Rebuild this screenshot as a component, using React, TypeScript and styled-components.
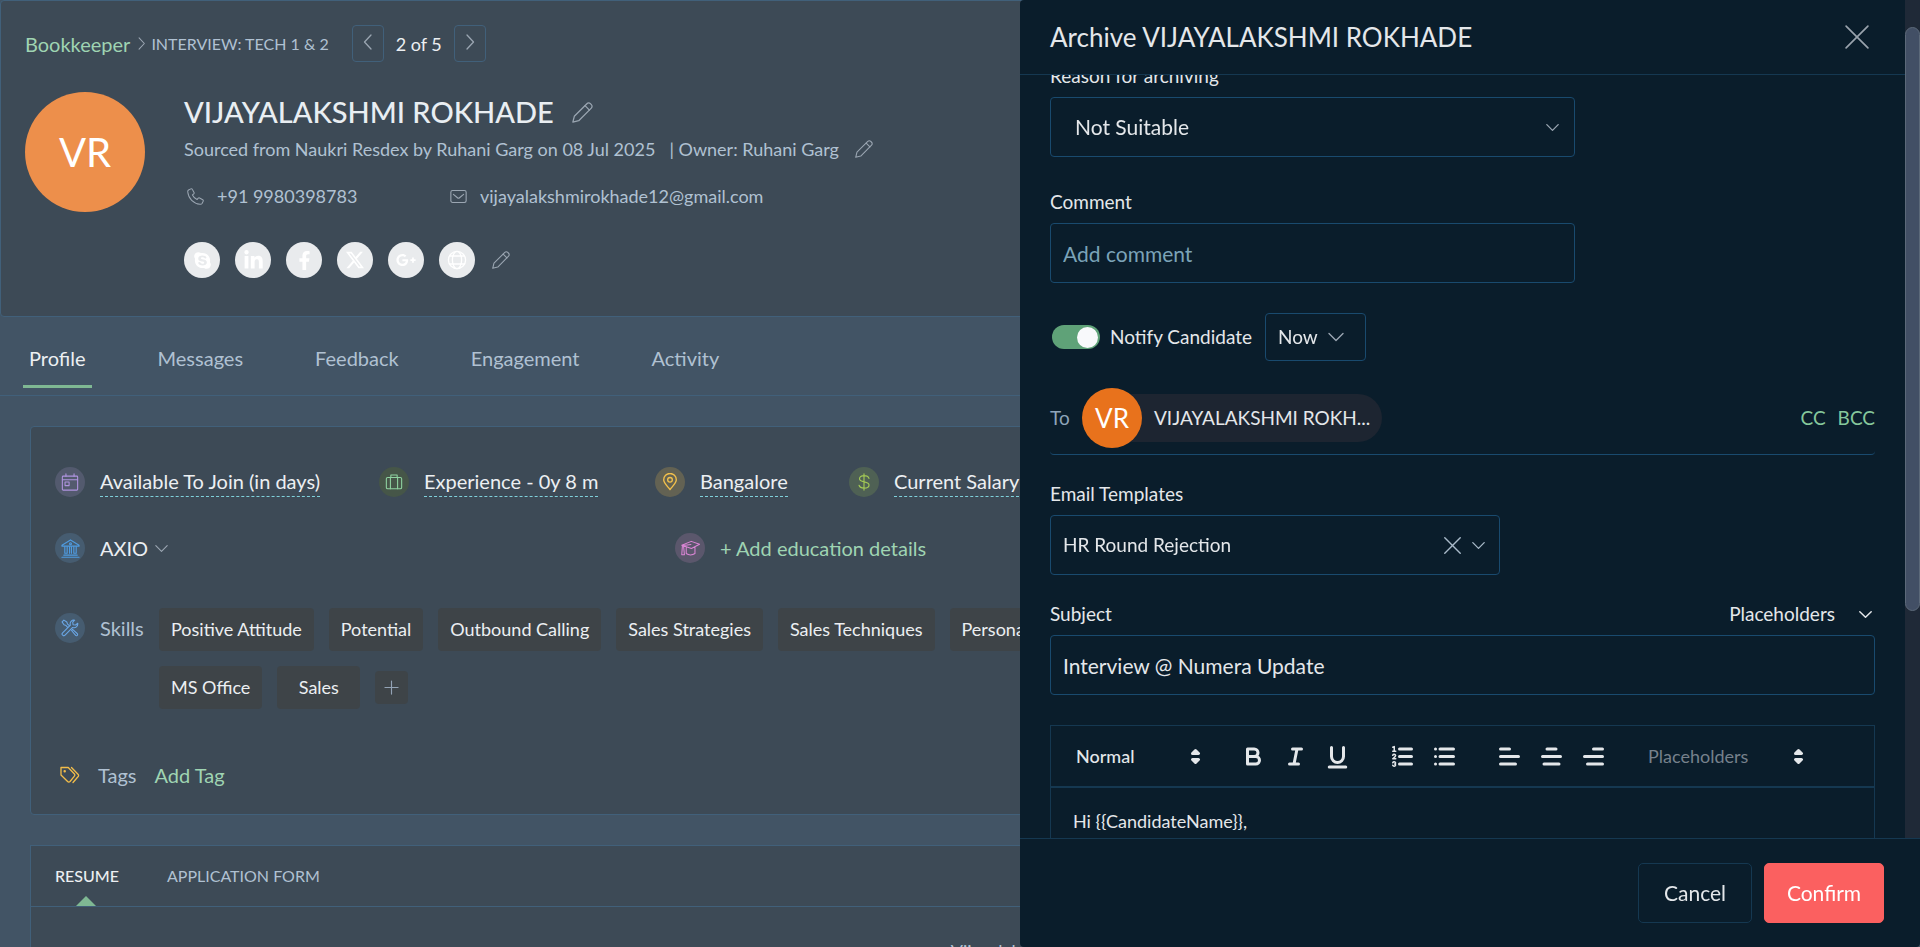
import React, { useLayoutEffect, useRef } from 'react';
import styled, { createGlobalStyle, css } from 'styled-components';
import { FaSkype, FaLinkedinIn, FaFacebookF, FaGooglePlusG } from 'react-icons/fa';
import { BsTwitterX } from 'react-icons/bs';

const c = {
  page: '#425465',
  panel: '#3d4a56',
  line: '#41607a',
  text: '#eceff2',
  muted: '#b0c1d2',
  icon: '#9ba6b2',
  green: '#9fd4b2',
  accent: '#7fb893',
  chip: '#3e4448',
  drawer: '#0a1d2b',
  field: '#194a6e',
  edge: '#153851',
  white: '#e4e7ea',
};

const GlobalStyle = createGlobalStyle`
  *, *::before, *::after { box-sizing: border-box; }
  html, body, #root { height: 100%; }
  body {
    margin: 0;
    overflow: hidden;
    background: ${c.page};
    color: ${c.text};
    font-family: Lato, "Liberation Sans", sans-serif;
    font-size: 20px;
    line-height: 26px;
  }
  button, input, select { font: inherit; color: inherit; }
  button { padding: 0; border: 0; background: none; cursor: pointer; }
  h1, h2, p { margin: 0; font-weight: 400; }
  a { color: inherit; text-decoration: none; }
  svg { display: block; flex: none; }
`;

/* ---------- icons ---------- */

type StrokeProps = {
  size: number;
  w?: number;
  box?: number;
  color?: string;
  children: React.ReactNode;
};

const Stroke = ({ size, w = 1, box = 20, color = 'currentColor', children }: StrokeProps) => (
  <svg
    width={size}
    height={size}
    viewBox={`0 0 ${box} ${box}`}
    fill="none"
    stroke={color}
    strokeWidth={w}
    strokeLinecap="round"
    strokeLinejoin="round"
    aria-hidden="true"
  >
    {children}
  </svg>
);

const Pencil = ({ size }: { size: number }) => (
  <Stroke size={size} w={1.2} color={c.icon}>
    <path d="M.8 19.2 2.2 13.6 14.2 1.6a2.3 2.3 0 0 1 3.3 0l.9.9a2.3 2.3 0 0 1 0 3.3L6.4 17.8Z" />
    <path d="m12.4 3.5 4.2 4.2" />
  </Stroke>
);

const Chevron = ({ size, color = c.icon, w = 1.4 }: { size: number; color?: string; w?: number }) => (
  <Stroke size={size} w={w} box={16} color={color}>
    <path d="m1 4.5 7 7 7-7" />
  </Stroke>
);

const ChevronLeft = () => (
  <Stroke size={16} w={1.3} box={16} color={c.icon}>
    <path d="M11 1 4.5 8l6.5 7" />
  </Stroke>
);

const ChevronRight = ({ size = 16 }: { size?: number }) => (
  <Stroke size={size} w={1.3} box={16} color={c.icon}>
    <path d="m5 1 6.5 7L5 15" />
  </Stroke>
);

const Cross = ({ size, w = 1.5, color = '#9aa3ad' }: { size: number; w?: number; color?: string }) => (
  <Stroke size={size} w={w} box={22} color={color}>
    <path d="m1 1 20 20M21 1 1 21" />
  </Stroke>
);

const Phone = () => (
  <Stroke size={17} w={1.2} color={c.icon}>
    <path d="M4.5 1 1.8 2.3C1 2.8.8 3.7.9 4.7 1.6 12.3 7.7 18.4 15.3 19.1c1 .1 1.9-.1 2.4-.9l1.3-2.7c.3-.7.1-1.4-.5-1.7l-3.7-2.1c-.6-.3-1.2-.2-1.6.3l-1.4 1.6C9.5 12.5 7.5 10.5 6.4 8.2L8 6.8c.5-.4.6-1 .3-1.6L6.2 1.5C5.9.9 5.2.7 4.5 1Z" />
  </Stroke>
);

const Mail = () => (
  <Stroke size={17} w={1.3} color={c.icon}>
    <rect x="1" y="3" width="18" height="14" rx="2" />
    <path d="m4 7.5 4.8 4c.7.6 1.7.6 2.4 0l4.8-4" />
  </Stroke>
);

const Globe = () => (
  <Stroke size={20} w={1.3} color="#fff">
    <circle cx="10" cy="10" r="8.6" />
    <ellipse cx="10" cy="10" rx="4.6" ry="8.6" />
    <path d="M2.5 6h15M2.5 14h15" />
  </Stroke>
);

const CalendarIcon = () => (
  <Stroke size={18} w={1.2} color="#b094e0">
    <rect x="1.5" y="3.5" width="17" height="15.5" rx="1" />
    <path d="M1.5 7.5h17M5.5 1v2.5M14.5 1v2.5" />
    <rect x="4.5" y="10" width="4.5" height="4" />
  </Stroke>
);

const CaseIcon = () => (
  <Stroke size={18} w={1.2} color="#8fd3a0">
    <rect x="1.5" y="5" width="17" height="12.5" rx="1.5" />
    <path d="M6 5v12.5M14 5v12.5M6.5 5V2.2h7V5" />
  </Stroke>
);

const PinIcon = () => (
  <Stroke size={18} w={1.5} color="#f2c04c">
    <path d="M10 18.5c-3-4-7-7.5-7-11a7 7 0 0 1 14 0c0 3.5-4 7-7 11Z" />
    <circle cx="10" cy="7.6" r="2.6" />
  </Stroke>
);

const DollarIcon = () => (
  <Stroke size={18} w={1.3} color="#a3c955">
    <path d="M10 1v18M15.5 6c-.6-1.8-2.6-3-5.4-3C6.9 3 5 4.4 5 6.4 5 11 15.6 8.6 15.6 13.3c0 2.2-2.2 3.5-5.5 3.5-3 0-5-1.2-5.6-3.2" />
  </Stroke>
);

const BankIcon = () => (
  <Stroke size={19} w={1.2} color="#4f9be0">
    <path d="M1 6.5 10 1l9 5.5v1H1ZM3 17h14M1 19.2h18" />
    <path d="M4 8v7M6.5 8v7M4 15h2.5M9 8v7M11 8v7M13.5 8v7M16 8v7h-2.5" />
    <circle cx="10" cy="5" r="1" />
  </Stroke>
);

const CapIcon = () => (
  <Stroke size={19} w={1.1} color="#dc86d6">
    <path d="m.8 6.500 10-4 8.700 3-8.500 4.500ZM1.500 7l-.7 9.500h2.800L2.700 7.500M5.500 8.300v7c2.500 1.900 6.500 1.900 9.200 0v-7M2.500 6.800l8-1" />
  </Stroke>
);

const ToolsIcon = () => (
  <Stroke size={18} w={1.2} color="#6aa7e6">
    <path d="M7.400 9.300 5.600 7.300 3.300 6.400 1.200 3.200l2-2 3.200 2.100.9 2.300 2 1.800" />
    <path d="m11.700 12.800 1.200-1.200 5.300 4.800c1 1.100-.8 2.900-1.900 1.900Z" />
    <path d="M18.600 4.700a4.200 4.200 0 0 1-5.600 4.700L4.500 18a1.900 1.900 0 0 1-2.700-2.700l8.600-8.500A4.200 4.200 0 0 1 15.200 1.300L13 3.500l.4 2.800 2.900.4Z" />
  </Stroke>
);

const TagsIcon = () => (
  <Stroke size={20} w={1.3} color="#f2bd4a">
    <path d="M1 2.500h7.200l6 6.200c.8.800.8 1.900 0 2.600L10 16.500c-.7.700-1.700.7-2.400 0L1 10Z" />
    <path d="m11.500 2.500 6.500 6.700c.8.800.8 1.900 0 2.600L13 17.500" />
    <circle cx="4.700" cy="6.200" r=".6" />
  </Stroke>
);

const EditorGlyph = ({ children }: { children: React.ReactNode }) => (
  <Stroke size={27} w={2} box={18} color={c.white}>
    {children}
  </Stroke>
);

const UpDown = () => (
  <svg width="27" height="27" viewBox="0 0 18 18" fill={c.white} stroke={c.white} strokeWidth="2" strokeLinejoin="round" aria-hidden="true">
    <path d="m7 11 2 2 2-2ZM7 7l2-2 2 2Z" />
  </svg>
);

/* ---------- candidate page ---------- */

const Page = styled.main`
  height: 100%;
  overflow: hidden;
`;

const Panel = styled.section`
  border: 1px solid ${c.line};
  border-radius: 4px;
  background: ${c.panel};
`;

const Header = styled(Panel)`
  padding: 24px 24px 38px;
`;

const Crumbs = styled.nav`
  display: flex;
  align-items: center;
  height: 37px;
`;

const JobLink = styled.a`
  color: ${c.green};
  margin-right: 5px;
`;

const Stage = styled.span`
  margin: 0 23px 0 3px;
  color: ${c.muted};
  font-size: 16px;
`;

const StepButton = styled.button`
  display: grid;
  place-items: center;
  width: 32px;
  height: 37px;
  padding-bottom: 4px;
  border: 1px solid ${c.line};
  border-radius: 4px;
`;

const Position = styled.span`
  width: 70px;
  font-size: 18px;
  text-align: center;
`;

const Identity = styled.div`
  display: flex;
  gap: 39px;
  margin-top: 30px;
`;

const Avatar = styled.div<{ $size: number }>`
  display: grid;
  flex: none;
  place-items: center;
  width: ${p => p.$size}px;
  height: ${p => p.$size}px;
  border-radius: 50%;
  background: ${p => (p.$size > 100 ? '#ed8f4b' : '#e8721c')};
  color: #fff;
  font-size: ${p => (p.$size > 100 ? 40 : 26)}px;
`;

const Details = styled.div`
  min-width: 0;
  color: ${c.muted};
  font-size: 18px;
`;

const NameRow = styled.div`
  display: flex;
  align-items: center;
  gap: 16px;
  height: 40px;
`;

const Name = styled.h1`
  color: #e9eef2;
  font-size: 29px;
  font-weight: 500;
`;

const SourceRow = styled.div`
  display: flex;
  align-items: center;
  gap: 14px;
  height: 34px;
`;

const IconButton = styled.button`
  display: grid;
  place-items: center;
  margin-left: 2px;
`;

const ContactRow = styled.address`
  display: grid;
  grid-template-columns: 263px auto;
  margin: 17px 0 33px 3px;
  font-style: normal;
`;

const Contact = styled.a`
  display: flex;
  align-items: center;
  gap: 13px;
`;

const Socials = styled.div`
  display: flex;
  align-items: center;
  gap: 15px;
`;

const Social = styled.a`
  display: grid;
  place-items: center;
  width: 36px;
  height: 36px;
  border-radius: 50%;
  background: #e9ebed;
  color: #fff;
`;

const Tabs = styled.nav`
  display: flex;
  gap: 60px;
  height: 79px;
  padding: 0 23px;
  border-bottom: 1px solid ${c.line};
`;

const Tab = styled.a<{ $active?: boolean }>`
  height: 71px;
  padding: 28px 6px 0;
  border-bottom: 3px solid ${p => (p.$active ? c.accent : 'transparent')};
  color: ${p => (p.$active ? c.text : c.muted)};
`;

const ProfileCard = styled(Panel)`
  margin: 30px;
  padding: 40px 24px 26px;
`;

const Facts = styled.div`
  display: grid;
  grid-template-columns: 324px 276px 194px auto;
`;

const Background = styled.div`
  display: grid;
  grid-template-columns: 620px auto;
  margin-top: 36px;
`;

const Fact = styled.div`
  display: flex;
  align-items: center;
  gap: 15px;
  height: 30px;
  white-space: nowrap;
`;

const Bubble = styled.span<{ $bg: string }>`
  display: grid;
  flex: none;
  place-items: center;
  width: 30px;
  height: 30px;
  border-radius: 50%;
  background: ${p => p.$bg};
`;

const FactButton = styled.button`
  height: 30px;
  padding-bottom: 2px;
  border-bottom: 1px dashed #7fd0da;
`;

const Company = styled.button`
  display: flex;
  align-items: center;
  gap: 7px;
`;

const GreenButton = styled.button`
  color: ${c.green};
`;

const SkillsRow = styled.div`
  display: flex;
  align-items: flex-start;
  gap: 16px;
  margin-top: 45px;
`;

const SkillsLabel = styled(Fact)`
  width: 88px;
  margin-top: 5px;
  color: ${c.muted};
`;

const SkillList = styled.div`
  display: flex;
  flex-wrap: wrap;
  align-items: center;
  gap: 15px;
  max-width: 980px;
`;

const Chip = styled.span`
  min-width: 83px;
  height: 43px;
  padding: 0 12px;
  border-radius: 4px;
  background: ${c.chip};
  font-size: 18px;
  line-height: 43px;
  text-align: center;
`;

const AddSkill = styled.button`
  display: grid;
  place-items: center;
  width: 33px;
  height: 33px;
  border-radius: 4px;
  background: ${c.chip};
`;

const TagsRow = styled.div`
  display: flex;
  align-items: center;
  gap: 18px;
  margin: 53px 0 0 5px;
  color: ${c.muted};
`;

const ResumeCard = styled(Panel)`
  margin: 0 30px;
  border-radius: 0;
`;

const ResumeTabs = styled.div`
  display: flex;
  gap: 48px;
  padding: 0 24px;
  height: 61px;
  border-bottom: 1px solid ${c.line};
`;

const ResumeTab = styled.button<{ $active?: boolean }>`
  position: relative;
  height: 60px;
  color: ${p => (p.$active ? c.text : c.muted)};
  font-size: 16px;
  font-weight: ${p => (p.$active ? 500 : 400)};
  ${p =>
    p.$active &&
    css`
      &::after {
        content: '';
        position: absolute;
        bottom: 0;
        left: 21px;
        border: 10px solid transparent;
        border-top-width: 0;
        border-bottom-color: ${c.accent};
      }
    `}
`;

const ResumeTitle = styled.h2`
  padding: 31px 0 300px 49.5%;
  color: ${c.muted};
  font-size: 18px;
`;

/* ---------- archive drawer ---------- */

const Drawer = styled.aside`
  position: fixed;
  inset: 0 0 0 auto;
  display: flex;
  flex-direction: column;
  width: min(900px, 100%);
  border-radius: 4px;
  background: ${c.drawer};
  color: ${c.white};
  font-size: 19px;
`;

const DrawerMain = styled.div`
  display: grid;
  flex: 1;
  grid-template-columns: 1fr 15px;
  min-height: 0;
`;

const DrawerColumn = styled.div`
  display: flex;
  flex-direction: column;
  min-width: 0;
  min-height: 0;
`;

const DrawerHead = styled.header`
  display: flex;
  flex: none;
  align-items: center;
  justify-content: space-between;
  height: 75px;
  padding: 0 36px 0 30px;
  border-bottom: 1px solid ${c.edge};
`;

const DrawerTitle = styled.h2`
  font-size: 26px;
`;

const ScrollTrack = styled.div`
  padding-top: 27px;
  background: #1f2937;
`;

const ScrollThumb = styled.div`
  height: 72%;
  border: 1px solid #5c6979;
  border-radius: 8px;
  background: #424f65;
`;

const Form = styled.div`
  flex: 1;
  min-height: 0;
  padding: 32px 30px;
  overflow-y: auto;
  scrollbar-width: none;
`;

const Field = styled.div<{ $width?: number; $gap: number }>`
  max-width: ${p => (p.$width ? `${p.$width}px` : 'none')};
  margin-bottom: ${p => p.$gap}px;
`;

const LabelRow = styled.div`
  display: flex;
  justify-content: space-between;
  margin-bottom: 8px;
`;

const SelectWrap = styled.div`
  position: relative;
`;

const box = css`
  display: block;
  width: 100%;
  height: 60px;
  padding: 0 12px;
  border: 1px solid ${c.field};
  border-radius: 4px;
  outline: 0;
  background: transparent;
  appearance: none;
`;

const Input = styled.input`
  ${box}
  font-size: 21px;
  &::placeholder { color: #7ba3b8; opacity: 1; }
`;

const Select = styled.select<{ $roomy?: boolean }>`
  ${box}
  padding-left: ${p => (p.$roomy ? 24 : 12)}px;
  font-size: ${p => (p.$roomy ? 21 : 19)}px;
`;

const NowSelect = styled.select`
  ${box}
  width: 101px;
  height: 48px;
`;

const SelectIcons = styled.span<{ $right: number }>`
  position: absolute;
  top: 0;
  right: ${p => p.$right}px;
  bottom: 0;
  display: flex;
  align-items: center;
  gap: 11px;
  pointer-events: none;
  button { pointer-events: auto; }
`;

const PlaceholderButton = styled.button`
  display: flex;
  align-items: center;
  gap: 24px;
  margin-right: 3px;
`;

const NotifyRow = styled.div`
  display: flex;
  align-items: center;
  gap: 10px;
  margin: 0 0 27px 2px;
  label { width: 145px; }
`;

const Toggle = styled.input`
  display: flex;
  align-items: center;
  width: 48px;
  height: 24px;
  margin: 0;
  padding: 0 2px;
  border-radius: 12px;
  background: #33475a;
  appearance: none;
  &::before {
    content: '';
    width: 21px;
    height: 21px;
    border-radius: 50%;
    background: #f8f9fb;
  }
  &:checked { background: #5fa278; }
  &:checked::before { margin-left: auto; }
`;

const ToRow = styled.div`
  display: flex;
  align-items: center;
  height: 67px;
  margin-bottom: 26px;
  padding-bottom: 6px;
  border-bottom: 1px solid ${c.field};
  border-radius: 4px;
`;

const ToLabel = styled.span`
  width: 32px;
  color: #8ea4ba;
`;

const Recipient = styled.div`
  display: flex;
  align-items: center;
`;

const RecipientName = styled.span`
  width: 270px;
  height: 48px;
  margin-left: -30px;
  padding: 0 12px 0 42px;
  border-radius: 0 24px 24px 0;
  background: #1d2531;
  line-height: 48px;
  white-space: nowrap;
`;

const RecipientAvatar = styled(Avatar)`
  z-index: 1;
`;

const CopyButtons = styled.div`
  display: flex;
  gap: 12px;
  margin-left: auto;
  color: #86c89c;
`;

const Editor = styled.div`
  min-height: 480px;
  border: 1px solid ${c.edge};
`;

const Toolbar = styled.div`
  display: flex;
  align-items: center;
  gap: 23px;
  height: 62px;
  padding-left: 25px;
  border-bottom: 2px solid ${c.edge};
`;

const ToolGroup = styled.div`
  display: flex;
`;

const Tool = styled.button`
  display: grid;
  place-items: center;
  width: 42px;
  height: 36px;
`;

const Picker = styled.button<{ $width: number; $dim?: boolean }>`
  display: flex;
  align-items: center;
  justify-content: space-between;
  width: ${p => p.$width}px;
  margin-left: ${p => (p.$dim ? 11 : 0)}px;
  color: ${p => (p.$dim ? '#76818c' : c.white)};
  font-size: 18px;
  font-weight: ${p => (p.$dim ? 400 : 500)};
`;

const Message = styled.p`
  padding: 20px 22px;
  font-size: 18px;
`;

const DrawerFoot = styled.footer`
  display: flex;
  justify-content: flex-end;
  gap: 12px;
  padding: 24px 36px;
  border-top: 1px solid ${c.edge};
`;

const Action = styled.button<{ $primary?: boolean }>`
  width: ${p => (p.$primary ? 120 : 114)}px;
  height: 60px;
  border: 1px solid ${p => (p.$primary ? '#fb6060' : c.edge)};
  border-radius: 5px;
  background: ${p => (p.$primary ? '#fb6060' : 'transparent')};
  color: ${p => (p.$primary ? '#fff' : c.white)};
  font-size: 21px;
`;

const skills = [
  'Positive Attitude',
  'Potential',
  'Outbound Calling',
  'Sales Strategies',
  'Sales Techniques',
  'Personal Selling',
  'MS Office',
  'Sales',
];

const socials = [
  { name: 'Skype', icon: <FaSkype size={19} /> },
  { name: 'LinkedIn', icon: <FaLinkedinIn size={21} /> },
  { name: 'Facebook', icon: <FaFacebookF size={19} /> },
  { name: 'X', icon: <BsTwitterX size={18} /> },
  { name: 'Google Plus', icon: <FaGooglePlusG size={20} /> },
  { name: 'Website', icon: <Globe /> },
];

const CandidateHeader = () => (
  <Header>
    <Crumbs aria-label="Breadcrumb">
      <JobLink href="#job">Bookkeeper</JobLink>
      <ChevronRight size={13} />
      <Stage>INTERVIEW: TECH 1 &amp; 2</Stage>
      <StepButton aria-label="Previous candidate"><ChevronLeft /></StepButton>
      <Position>2 of 5</Position>
      <StepButton aria-label="Next candidate"><ChevronRight /></StepButton>
    </Crumbs>
    <Identity>
      <Avatar $size={120}>VR</Avatar>
      <Details>
        <NameRow>
          <Name>VIJAYALAKSHMI ROKHADE</Name>
          <IconButton aria-label="Edit name"><Pencil size={21} /></IconButton>
        </NameRow>
        <SourceRow>
          <span>Sourced from Naukri Resdex by Ruhani Garg on 08 Jul 2025</span>
          <span>| Owner: Ruhani Garg</span>
          <IconButton aria-label="Edit owner"><Pencil size={18} /></IconButton>
        </SourceRow>
        <ContactRow>
          <Contact href="tel:+919980398783"><Phone />+91 9980398783</Contact>
          <Contact href="mailto:vijayalakshmirokhade12@gmail.com"><Mail />vijayalakshmirokhade12@gmail.com</Contact>
        </ContactRow>
        <Socials>
          {socials.map(s => (
            <Social key={s.name} href="#social" aria-label={s.name}>{s.icon}</Social>
          ))}
          <IconButton aria-label="Edit social links"><Pencil size={18} /></IconButton>
        </Socials>
      </Details>
    </Identity>
  </Header>
);

const Profile = () => (
  <ProfileCard>
    <Facts>
      <Fact><Bubble $bg="#535a6e"><CalendarIcon /></Bubble><FactButton>Available To Join (in days)</FactButton></Fact>
      <Fact><Bubble $bg="#465648"><CaseIcon /></Bubble><FactButton>Experience - 0y 8 m</FactButton></Fact>
      <Fact><Bubble $bg="#636253"><PinIcon /></Bubble><FactButton>Bangalore</FactButton></Fact>
      <Fact><Bubble $bg="#4f6154"><DollarIcon /></Bubble><FactButton>Current Salary</FactButton></Fact>
    </Facts>
    <Background>
      <Fact><Bubble $bg="#465c70"><BankIcon /></Bubble><Company>AXIO<Chevron size={13} /></Company></Fact>
      <Fact><Bubble $bg="#5b576c"><CapIcon /></Bubble><GreenButton>+ Add education details</GreenButton></Fact>
    </Background>
    <SkillsRow>
      <SkillsLabel><Bubble $bg="#465c70"><ToolsIcon /></Bubble>Skills</SkillsLabel>
      <SkillList>
        {skills.map(s => <Chip key={s}>{s}</Chip>)}
        <AddSkill aria-label="Add skill">
          <Stroke size={15} w={1.2} box={16} color="#93a3b5"><path d="M8 1v14M1 8h14" /></Stroke>
        </AddSkill>
      </SkillList>
    </SkillsRow>
    <TagsRow><TagsIcon /><span>Tags</span><GreenButton>Add Tag</GreenButton></TagsRow>
  </ProfileCard>
);

const ArchiveDrawer = () => {
  const form = useRef<HTMLDivElement>(null);
  useLayoutEffect(() => {
    if (form.current) form.current.scrollTop = 44;
  }, []);

  return (
    <Drawer role="dialog" aria-label="Archive candidate">
      <DrawerMain>
        <DrawerColumn>
          <DrawerHead>
            <DrawerTitle>Archive VIJAYALAKSHMI ROKHADE</DrawerTitle>
            <IconButton aria-label="Close"><Cross size={24} /></IconButton>
          </DrawerHead>
          <Form ref={form}>
            <Field $width={525} $gap={32}>
              <LabelRow><label htmlFor="reason">Reason for archiving</label></LabelRow>
              <SelectWrap>
                <Select id="reason" $roomy><option>Not Suitable</option></Select>
                <SelectIcons $right={16}><Chevron size={13} w={1.6} /></SelectIcons>
              </SelectWrap>
            </Field>
            <Field $width={525} $gap={30}>
              <LabelRow><label htmlFor="comment">Comment</label></LabelRow>
              <Input id="comment" placeholder="Add comment" />
            </Field>
            <NotifyRow>
              <Toggle type="checkbox" role="switch" id="notify" defaultChecked />
              <label htmlFor="notify">Notify Candidate</label>
              <SelectWrap>
                <NowSelect aria-label="When to notify"><option>Now</option></NowSelect>
                <SelectIcons $right={22}><Chevron size={16} /></SelectIcons>
              </SelectWrap>
            </NotifyRow>
            <ToRow>
              <ToLabel>To</ToLabel>
              <Recipient>
                <RecipientAvatar $size={60}>VR</RecipientAvatar>
                <RecipientName>VIJAYALAKSHMI ROKH...</RecipientName>
              </Recipient>
              <CopyButtons><button>CC</button><button>BCC</button></CopyButtons>
            </ToRow>
            <Field $width={450} $gap={26}>
              <LabelRow><label htmlFor="template">Email Templates</label></LabelRow>
              <SelectWrap>
                <Select id="template"><option>HR Round Rejection</option></Select>
                <SelectIcons $right={15}>
                  <button aria-label="Clear template"><Cross size={17} w={1.8} color="#a9bac9" /></button>
                  <Chevron size={13} w={1.6} color="#a9bac9" />
                </SelectIcons>
              </SelectWrap>
            </Field>
            <Field $gap={30}>
              <LabelRow>
                <label htmlFor="subject">Subject</label>
                <PlaceholderButton>Placeholders<Chevron size={13} w={1.8} color={c.white} /></PlaceholderButton>
              </LabelRow>
              <Input id="subject" defaultValue="Interview @ Numera Update" />
            </Field>
            <Editor>
              <Toolbar>
                <Picker $width={133}>Normal<UpDown /></Picker>
                <ToolGroup>
                  <Tool aria-label="Bold"><EditorGlyph><path d="M5 4h4.500a2.500 2.500 0 0 1 0 5H5ZM5 9h5.500a2.500 2.500 0 0 1 0 5H5Z" /></EditorGlyph></Tool>
                  <Tool aria-label="Italic"><EditorGlyph><path d="M7 4h6M5 14h6M8 14l2-10" /></EditorGlyph></Tool>
                  <Tool aria-label="Underline"><EditorGlyph><path d="M5 3v6a4 4 0 0 0 8 0V3M3.500 16h11" /></EditorGlyph></Tool>
                </ToolGroup>
                <ToolGroup>
                  <Tool aria-label="Numbered list">
                    <EditorGlyph>
                      <path d="M7 4h8M7 9h8M7 14h8" />
                      <path strokeWidth="1" d="M2.500 5.500h2M2.500 2.800l1-.4v3M4.500 10.500h-2c0-.3 1.900-1.100 1.900-2.200a1 1 0 0 0-1.900-.1M2.500 14.800a1 1 0 0 0 1.900-.1.700.700 0 0 0-.6-.7.700.700 0 0 0 .6-.7 1 1 0 0 0-1.900-.1" />
                    </EditorGlyph>
                  </Tool>
                  <Tool aria-label="Bulleted list"><EditorGlyph><path d="M6 4h9M6 9h9M6 14h9M3 4h.01M3 9h.01M3 14h.01" /></EditorGlyph></Tool>
                </ToolGroup>
                <ToolGroup>
                  <Tool aria-label="Align left"><EditorGlyph><path d="M3 4h6M3 9h12M3 14h10" /></EditorGlyph></Tool>
                  <Tool aria-label="Align center"><EditorGlyph><path d="M6 4h6M3 9h12M4 14h10" /></EditorGlyph></Tool>
                  <Tool aria-label="Align right"><EditorGlyph><path d="M9 4h6M3 9h12M5 14h10" /></EditorGlyph></Tool>
                </ToolGroup>
                <Picker $width={164} $dim>Placeholders<UpDown /></Picker>
              </Toolbar>
              <Message>{'Hi {{CandidateName}},'}</Message>
            </Editor>
          </Form>
        </DrawerColumn>
        <ScrollTrack><ScrollThumb /></ScrollTrack>
      </DrawerMain>
      <DrawerFoot>
        <Action>Cancel</Action>
        <Action $primary>Confirm</Action>
      </DrawerFoot>
    </Drawer>
  );
};

export default function App() {
  return (
    <>
      <GlobalStyle />
      <Page>
        <CandidateHeader />
        <Tabs>
          <Tab href="#profile" $active>Profile</Tab>
          <Tab href="#messages">Messages</Tab>
          <Tab href="#feedback">Feedback</Tab>
          <Tab href="#engagement">Engagement</Tab>
          <Tab href="#activity">Activity</Tab>
        </Tabs>
        <Profile />
        <ResumeCard>
          <ResumeTabs>
            <ResumeTab $active>RESUME</ResumeTab>
            <ResumeTab>APPLICATION FORM</ResumeTab>
          </ResumeTabs>
          <ResumeTitle>Vijayalakshmi</ResumeTitle>
        </ResumeCard>
      </Page>
      <ArchiveDrawer />
    </>
  );
}
